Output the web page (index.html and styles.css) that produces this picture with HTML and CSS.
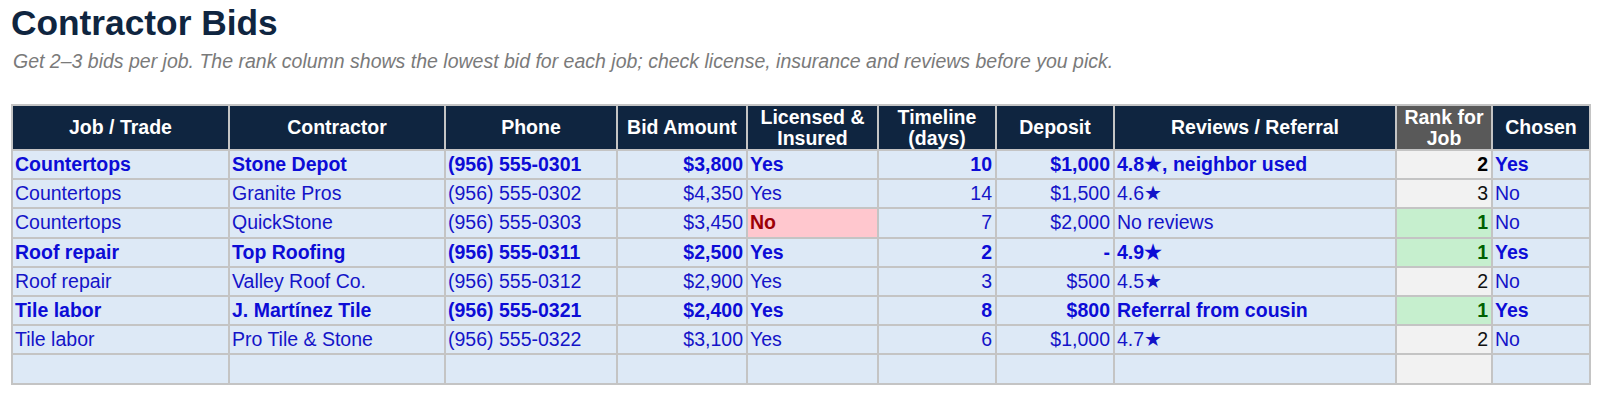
FILE: index.html
```html
<!DOCTYPE html>
<html>
<head>
<meta charset="utf-8">
<link rel="stylesheet" href="styles.css">
</head>
<body>
<div class="page">
  <h1 class="title">Contractor Bids</h1>
  <p class="subtitle">Get 2–3 bids per job. The rank column shows the lowest bid for each job; check license, insurance and reviews before you pick.</p>
  <table class="bids">
    <colgroup>
      <col class="c-job"><col class="c-contractor"><col class="c-phone"><col class="c-bid"><col class="c-lic"><col class="c-time"><col class="c-dep"><col class="c-rev"><col class="c-rank"><col class="c-chosen">
    </colgroup>
    <thead>
      <tr>
        <th>Job / Trade</th>
        <th>Contractor</th>
        <th>Phone</th>
        <th>Bid Amount</th>
        <th>Licensed &amp;<br>Insured</th>
        <th>Timeline<br>(days)</th>
        <th>Deposit</th>
        <th>Reviews / Referral</th>
        <th class="rank-h">Rank for<br>Job</th>
        <th>Chosen</th>
      </tr>
    </thead>
    <tbody>
      <tr class="pick">
        <td>Countertops</td><td>Stone Depot</td><td>(956) 555-0301</td><td class="num">$3,800</td><td>Yes</td><td class="num">10</td><td class="num">$1,000</td><td>4.8★, neighbor used</td><td class="num rank">2</td><td>Yes</td>
      </tr>
      <tr>
        <td>Countertops</td><td>Granite Pros</td><td>(956) 555-0302</td><td class="num">$4,350</td><td>Yes</td><td class="num">14</td><td class="num">$1,500</td><td>4.6★</td><td class="num rank">3</td><td>No</td>
      </tr>
      <tr>
        <td>Countertops</td><td>QuickStone</td><td>(956) 555-0303</td><td class="num">$3,450</td><td class="bad">No</td><td class="num">7</td><td class="num">$2,000</td><td>No reviews</td><td class="num rank best">1</td><td>No</td>
      </tr>
      <tr class="pick">
        <td>Roof repair</td><td>Top Roofing</td><td>(956) 555-0311</td><td class="num">$2,500</td><td>Yes</td><td class="num">2</td><td class="num">-</td><td>4.9★</td><td class="num rank best">1</td><td>Yes</td>
      </tr>
      <tr>
        <td>Roof repair</td><td>Valley Roof Co.</td><td>(956) 555-0312</td><td class="num">$2,900</td><td>Yes</td><td class="num">3</td><td class="num">$500</td><td>4.5★</td><td class="num rank">2</td><td>No</td>
      </tr>
      <tr class="pick">
        <td>Tile labor</td><td>J. Martínez Tile</td><td>(956) 555-0321</td><td class="num">$2,400</td><td>Yes</td><td class="num">8</td><td class="num">$800</td><td>Referral from cousin</td><td class="num rank best">1</td><td>Yes</td>
      </tr>
      <tr>
        <td>Tile labor</td><td>Pro Tile &amp; Stone</td><td>(956) 555-0322</td><td class="num">$3,100</td><td>Yes</td><td class="num">6</td><td class="num">$1,000</td><td>4.7★</td><td class="num rank">2</td><td>No</td>
      </tr>
      <tr class="empty">
        <td>&nbsp;</td><td></td><td></td><td></td><td></td><td></td><td></td><td></td><td class="rank"></td><td></td>
      </tr>
    </tbody>
  </table>
</div>
</body>
</html>
```
FILE: styles.css
```css
html, body {
  margin: 0;
  padding: 0;
  background: #ffffff;
}
body {
  font-family: "Liberation Sans", Arial, sans-serif;
}
.page {
  padding: 3px 11px 0 11px;
}
.title {
  margin: 0;
  font-size: 35.3px;
  font-weight: bold;
  color: #0f2540;
  line-height: 40px;
}
.subtitle {
  margin: 7px 0 32px 2px;
  font-size: 19.5px;
  font-style: italic;
  color: #7a7a7a;
  line-height: 22px;
}
.bids {
  border-collapse: collapse;
  table-layout: fixed;
  width: 1578px;
  font-size: 19.5px;
  border: 2px solid #c4c4c4;
}
.c-job { width: 217px; }
.c-contractor { width: 216px; }
.c-phone { width: 172px; }
.c-bid { width: 130px; }
.c-lic { width: 131px; }
.c-time { width: 118px; }
.c-dep { width: 118px; }
.c-rev { width: 282px; }
.c-rank { width: 96px; }
.c-chosen { width: 98px; }
.bids th {
  background: #0f2540;
  color: #ffffff;
  font-weight: bold;
  text-align: center;
  line-height: 20.5px;
  padding: 1px 2px;
  border: 2px solid #c4c4c4;
  white-space: nowrap;
}
.bids th.rank-h {
  background: #595959;
}
.bids td {
  background: #dde9f6;
  color: #1414c8;
  line-height: 21.2px;
  padding: 3px 3px 3px 2px;
  border: 2px solid #c4c4c4;
  white-space: nowrap;
  overflow: hidden;
}
.bids tr.pick td {
  font-weight: bold;
  color: #0c0cd6;
}
.bids td.num {
  text-align: right;
}
.bids td.rank {
  background: #f2f2f2;
  color: #111111;
}
.bids tr.pick td.rank {
  color: #000000;
}
.bids td.rank.best,
.bids tr.pick td.rank.best {
  background: #c6efce;
  color: #006100;
  font-weight: bold;
}
.bids td.bad {
  background: #ffc7ce;
  color: #9c0006;
  font-weight: bold;
}
```
